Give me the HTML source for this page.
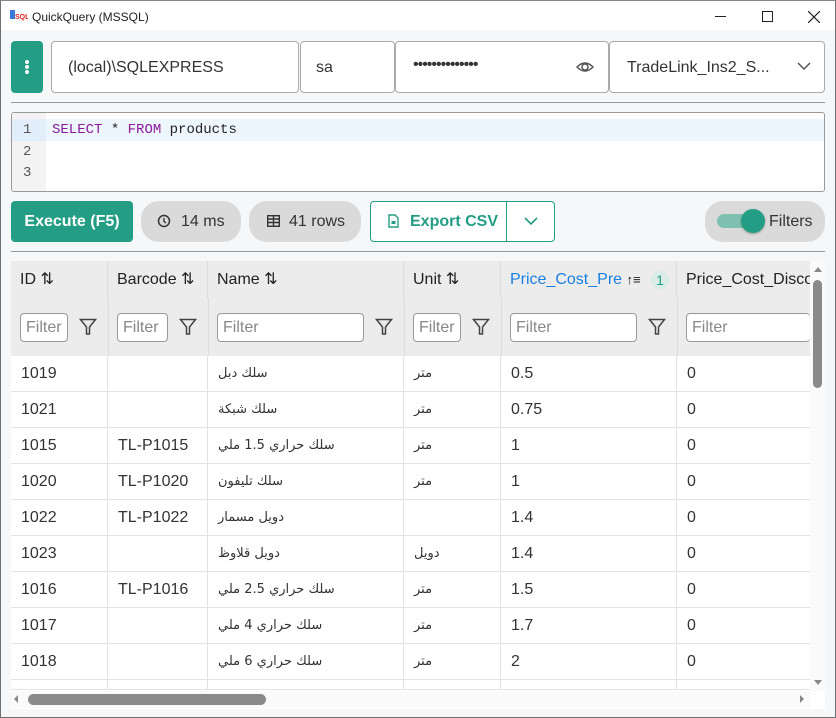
<!DOCTYPE html>
<html><head><meta charset="utf-8"><style>
*{box-sizing:border-box;margin:0;padding:0}
body{width:836px;height:718px;overflow:hidden;background:#fff;font-family:"Liberation Sans","DejaVu Sans",sans-serif;position:relative;color:#222}
.win{position:absolute;left:0;top:0;width:836px;height:718px;border:1px solid #707070;border-top:1px solid #888}
.title{position:absolute;left:1px;top:1px;right:1px;height:29px;background:#fff;font-size:12px}
.title span{position:absolute;left:30px;top:8px}
.body{position:absolute;left:1px;top:30px;right:1px;bottom:1px;background:#f5f7f9}
.a{position:absolute}
.inp{position:absolute;background:#fff;border:1px solid #aaa;border-radius:4px;font-size:16px;color:#333}
.pill{position:absolute;background:#dadada;border-radius:18px;font-size:16px;color:#333}
.row{position:absolute;left:11px;width:799px;height:36px;border-bottom:1px solid #e3e3e3;background:#fff;font-size:16px;color:#333}
.row div{position:absolute;top:0;height:36px;line-height:36px;border-right:1px solid #e3e3e3;padding-left:10px}
.ar{font-family:"DejaVu Sans",sans-serif;font-size:13px}
.fi{position:absolute;top:313px;height:29px;border:1px solid #999;border-radius:4px;background:#fff;color:#888;font-size:16px;line-height:27px;padding-left:5px;overflow:hidden}
.hd{position:absolute;top:261px;height:37px;line-height:37px;font-size:16px;color:#222;padding-left:9px;border-right:1px solid #ddd;overflow:hidden;white-space:nowrap}
</style></head><body>
<div class="win">
<div class="title">
<svg class="a" style="left:8px;top:8px" width="18" height="12"><rect x="0" y="0" width="5" height="9" fill="#3a7bd5"/><text x="5" y="9" font-size="7" font-weight="bold" fill="#d22" font-family="Liberation Sans">SQL</text></svg>
<span>QuickQuery (MSSQL)</span>
<div class="a" style="left:713px;top:14px;width:11px;height:1px;background:#222"></div>
<div class="a" style="left:760px;top:9px;width:11px;height:11px;border:1px solid #222"></div>
<svg class="a" style="left:806px;top:9px" width="12" height="12"><path d="M0 0L12 12M12 0L0 12" stroke="#222" stroke-width="1.2"/></svg>
</div>
</div>
<div class="body" style="left:1px">
</div>
<!-- top row -->
<div class="a" style="left:11px;top:41px;width:32px;height:52px;background:#239e84;border-radius:4px"></div>
<div class="a" style="left:25px;top:60px;width:4px;height:4px;background:#fff;border-radius:2px;box-shadow:0 5px #fff,0 10px #fff"></div>
<div class="inp" style="left:51px;top:41px;width:248px;height:52px;padding:17px 0 0 16px">(local)\SQLEXPRESS</div>
<div class="inp" style="left:300px;top:41px;width:95px;height:52px;padding:17px 0 0 15px">sa</div>
<div class="inp" style="left:395px;top:41px;width:214px;height:52px;padding:14px 0 0 17px;letter-spacing:-1px;font-size:16px">••••••••••••••</div>
<svg class="a" style="left:576px;top:59px" width="18" height="16"><path d="M1 8Q9 0 17 8Q9 16 1 8Z" fill="none" stroke="#555" stroke-width="1.5"/><circle cx="9" cy="8" r="3" fill="none" stroke="#555" stroke-width="1.5"/></svg>
<div class="inp" style="left:609px;top:41px;width:216px;height:52px;padding:17px 0 0 17px">TradeLink_Ins2_S...</div>
<svg class="a" style="left:797px;top:62px" width="14" height="9"><path d="M1 1L7 7L13 1" fill="none" stroke="#555" stroke-width="1.5"/></svg>
<div class="a" style="left:11px;top:102px;width:814px;height:1px;background:#999"></div>
<!-- editor -->
<div class="a" style="left:11px;top:112px;width:814px;height:80px;background:#fff;border:1px solid #999;border-radius:3px;overflow:hidden">
<div class="a" style="left:0;top:0;width:34px;height:80px;background:#f3f3f3"></div>
<div class="a" style="left:34px;top:6px;width:780px;height:22px;background:#eef6fd"></div>
<div class="a" style="left:0;top:6px;width:34px;height:22px;background:#e2eefa"></div>
<div class="a" style="left:11px;top:7px;font:14px 'Liberation Mono',monospace;color:#555;line-height:21.5px">1<br>2<br>3</div>
<div class="a" style="left:40px;top:7px;font:14px 'Liberation Mono',monospace;line-height:21.5px;color:#222"><span style="color:#8a1a9a">SELECT</span> * <span style="color:#8a1a9a">FROM</span> products</div>
</div>
<!-- buttons -->
<div class="a" style="left:11px;top:201px;width:122px;height:41px;background:#239e84;border-radius:4px;color:#fff;font-weight:bold;font-size:16px;line-height:41px;text-align:center">Execute (F5)</div>
<div class="pill" style="left:141px;top:201px;width:100px;height:41px;line-height:41px;padding-left:40px">14 ms</div>
<svg class="a" style="left:157px;top:214px" width="14" height="14"><circle cx="7" cy="7" r="5.5" fill="none" stroke="#333" stroke-width="1.5"/><path d="M7 4V7.5L9 9" fill="none" stroke="#333" stroke-width="1.4"/></svg>
<div class="pill" style="left:249px;top:201px;width:112px;height:41px;line-height:41px;padding-left:40px">41 rows</div>
<svg class="a" style="left:267px;top:215px" width="13" height="12"><rect x="0.7" y="0.7" width="11.6" height="10.6" fill="none" stroke="#333" stroke-width="1.4"/><path d="M0 4H13M0 7.5H13M6.5 0V12" stroke="#333" stroke-width="1.4"/></svg>
<div class="a" style="left:370px;top:201px;width:185px;height:41px;border:1px solid #239e84;border-radius:4px;background:#fff"></div>
<div class="a" style="left:506px;top:201px;width:1px;height:41px;background:#239e84"></div>
<svg class="a" style="left:388px;top:214px" width="11" height="14"><path d="M1 1H7L10 4V13H1Z" fill="none" stroke="#239e84" stroke-width="1.4"/><rect x="3.5" y="7" width="4" height="3" fill="#239e84"/></svg>
<div class="a" style="left:410px;top:201px;line-height:41px;font-size:16px;font-weight:bold;color:#239e84">Export CSV</div>
<svg class="a" style="left:524px;top:217px" width="14" height="9"><path d="M1 1L7 7L13 1" fill="none" stroke="#239e84" stroke-width="1.6"/></svg>
<div class="pill" style="left:705px;top:201px;width:120px;height:41px"></div>
<div class="a" style="left:717px;top:214px;width:40px;height:14px;border-radius:7px;background:#7fc1b0"></div>
<div class="a" style="left:741px;top:209px;width:24px;height:24px;border-radius:12px;background:#239e84;box-shadow:0 1px 2px rgba(0,0,0,.3)"></div>
<div class="a" style="left:769px;top:201px;line-height:41px;font-size:16px;color:#333">Filters</div>
<div class="a" style="left:11px;top:251px;width:814px;height:1px;background:#999"></div>
<!-- table -->
<div class="a" style="left:11px;top:261px;width:814px;height:448px;background:#fff;overflow:hidden">
<div class="a" style="left:0;top:0;width:799px;height:95px;background:#ececec"></div>
<div class="a" style="left:0;top:37px;width:799px;height:1px;background:#e2e2e2"></div>
</div>
<div class="hd" style="left:11px;width:97px">ID ⇅</div>
<div class="hd" style="left:108px;width:100px">Barcode ⇅</div>
<div class="hd" style="left:208px;width:196px">Name ⇅</div>
<div class="hd" style="left:404px;width:97px">Unit ⇅</div>
<div class="hd" style="left:501px;width:176px;color:#1a7fe0">Price_Cost_Pre <span style="color:#222;font-size:13px">↑≡</span></div>
<div class="a" style="left:651px;top:271px;width:18px;height:18px;border-radius:9px;background:#dcece7;color:#239e84;font-size:14px;text-align:center;line-height:18px">1</div>
<div class="hd" style="left:677px;width:133px;border:none">Price_Cost_Disco</div>
<div class="a" style="left:11px;top:298px;width:799px;height:58px;background:#ececec"></div>
<div class="a" style="left:108px;top:298px;width:1px;height:58px;background:#ddd"></div>
<div class="a" style="left:208px;top:298px;width:1px;height:58px;background:#ddd"></div>
<div class="a" style="left:404px;top:298px;width:1px;height:58px;background:#ddd"></div>
<div class="a" style="left:501px;top:298px;width:1px;height:58px;background:#ddd"></div>
<div class="a" style="left:677px;top:298px;width:1px;height:58px;background:#ddd"></div>
<div class="fi" style="left:20px;width:48px">Filter</div>
<div class="fi" style="left:117px;width:51px">Filter</div>
<div class="fi" style="left:217px;width:147px">Filter</div>
<div class="fi" style="left:413px;width:48px">Filter</div>
<div class="fi" style="left:510px;width:127px">Filter</div>
<div class="fi" style="left:686px;width:124px;border-right:none">Filter</div>
<svg class="a" style="left:79px;top:318px" width="18" height="18"><path d="M1.5 1.5H16.5L10.5 9V16H7.5V9Z" fill="none" stroke="#444" stroke-width="1.5"/></svg>
<svg class="a" style="left:179px;top:318px" width="18" height="18"><path d="M1.5 1.5H16.5L10.5 9V16H7.5V9Z" fill="none" stroke="#444" stroke-width="1.5"/></svg>
<svg class="a" style="left:375px;top:318px" width="18" height="18"><path d="M1.5 1.5H16.5L10.5 9V16H7.5V9Z" fill="none" stroke="#444" stroke-width="1.5"/></svg>
<svg class="a" style="left:472px;top:318px" width="18" height="18"><path d="M1.5 1.5H16.5L10.5 9V16H7.5V9Z" fill="none" stroke="#444" stroke-width="1.5"/></svg>
<svg class="a" style="left:648px;top:318px" width="18" height="18"><path d="M1.5 1.5H16.5L10.5 9V16H7.5V9Z" fill="none" stroke="#444" stroke-width="1.5"/></svg>
<div class="row" style="top:356px"><div style="left:0;width:97px">1019</div><div style="left:97px;width:100px"></div><div class="ar" style="left:197px;width:196px">سلك دبل</div><div class="ar" style="left:393px;width:97px">متر</div><div style="left:490px;width:176px">0.5</div><div style="left:666px;width:133px;border:none">0</div></div>
<div class="row" style="top:392px"><div style="left:0;width:97px">1021</div><div style="left:97px;width:100px"></div><div class="ar" style="left:197px;width:196px">سلك شبكة</div><div class="ar" style="left:393px;width:97px">متر</div><div style="left:490px;width:176px">0.75</div><div style="left:666px;width:133px;border:none">0</div></div>
<div class="row" style="top:428px"><div style="left:0;width:97px">1015</div><div style="left:97px;width:100px">TL-P1015</div><div class="ar" style="left:197px;width:196px">سلك حراري 1.5 ملي</div><div class="ar" style="left:393px;width:97px">متر</div><div style="left:490px;width:176px">1</div><div style="left:666px;width:133px;border:none">0</div></div>
<div class="row" style="top:464px"><div style="left:0;width:97px">1020</div><div style="left:97px;width:100px">TL-P1020</div><div class="ar" style="left:197px;width:196px">سلك تليفون</div><div class="ar" style="left:393px;width:97px">متر</div><div style="left:490px;width:176px">1</div><div style="left:666px;width:133px;border:none">0</div></div>
<div class="row" style="top:500px"><div style="left:0;width:97px">1022</div><div style="left:97px;width:100px">TL-P1022</div><div class="ar" style="left:197px;width:196px">دويل مسمار</div><div class="ar" style="left:393px;width:97px"></div><div style="left:490px;width:176px">1.4</div><div style="left:666px;width:133px;border:none">0</div></div>
<div class="row" style="top:536px"><div style="left:0;width:97px">1023</div><div style="left:97px;width:100px"></div><div class="ar" style="left:197px;width:196px">دويل قلاوظ</div><div class="ar" style="left:393px;width:97px">دويل</div><div style="left:490px;width:176px">1.4</div><div style="left:666px;width:133px;border:none">0</div></div>
<div class="row" style="top:572px"><div style="left:0;width:97px">1016</div><div style="left:97px;width:100px">TL-P1016</div><div class="ar" style="left:197px;width:196px">سلك حراري 2.5 ملي</div><div class="ar" style="left:393px;width:97px">متر</div><div style="left:490px;width:176px">1.5</div><div style="left:666px;width:133px;border:none">0</div></div>
<div class="row" style="top:608px"><div style="left:0;width:97px">1017</div><div style="left:97px;width:100px"></div><div class="ar" style="left:197px;width:196px">سلك حراري 4 ملي</div><div class="ar" style="left:393px;width:97px">متر</div><div style="left:490px;width:176px">1.7</div><div style="left:666px;width:133px;border:none">0</div></div>
<div class="row" style="top:644px"><div style="left:0;width:97px">1018</div><div style="left:97px;width:100px"></div><div class="ar" style="left:197px;width:196px">سلك حراري 6 ملي</div><div class="ar" style="left:393px;width:97px">متر</div><div style="left:490px;width:176px">2</div><div style="left:666px;width:133px;border:none">0</div></div>
<div class="row" style="top:680px;height:10px;overflow:hidden"><div style="left:0;width:97px"></div><div style="left:97px;width:100px"></div><div style="left:197px;width:196px"></div><div style="left:393px;width:97px"></div><div style="left:490px;width:176px"></div><div style="left:666px;width:133px;border:none"></div></div>
<!-- scrollbars -->
<div class="a" style="left:810px;top:261px;width:15px;height:430px;background:#fafafa"></div>
<div class="a" style="left:813px;top:280px;width:9px;height:108px;background:#8a8a8a;border-radius:5px"></div>
<div class="a" style="left:814px;top:267px;width:0;height:0;border:4px solid transparent;border-bottom:5px solid #888;border-top:none"></div>
<div class="a" style="left:814px;top:680px;width:0;height:0;border:4px solid transparent;border-top:5px solid #888;border-bottom:none"></div>
<div class="a" style="left:11px;top:691px;width:799px;height:17px;background:#fafafa"></div>
<div class="a" style="left:28px;top:694px;width:238px;height:11px;background:#8a8a8a;border-radius:6px"></div>
<div class="a" style="left:14px;top:695px;width:0;height:0;border:4px solid transparent;border-right:4px solid #888;border-left:none"></div>
<div class="a" style="left:800px;top:695px;width:0;height:0;border:4px solid transparent;border-left:4px solid #888;border-right:none"></div>
</body></html>
